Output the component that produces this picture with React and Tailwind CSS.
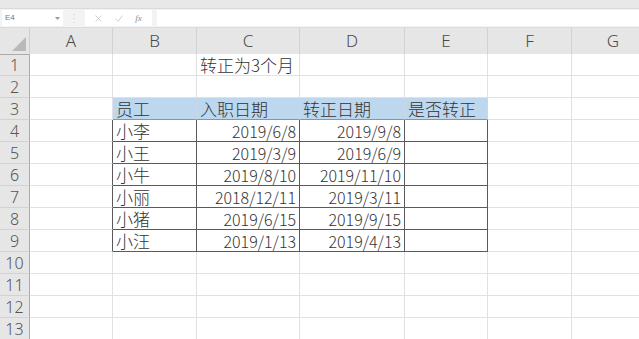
import React from "react";

const cols = ["A", "B", "C", "D", "E", "F", "G"];
const data = [
  ["小李", "2019/6/8", "2019/9/8"],
  ["小王", "2019/3/9", "2019/6/9"],
  ["小牛", "2019/8/10", "2019/11/10"],
  ["小丽", "2018/12/11", "2019/3/11"],
  ["小猪", "2019/6/15", "2019/9/15"],
  ["小汪", "2019/1/13", "2019/4/13"],
];

function cellClass(r, c) {
  const inTable = r >= 4 && r <= 9 && c >= 1 && c <= 4;
  const isHead = r === 3 && c >= 1 && c <= 4;
  let right = "border-r-[#e1e1e1]";
  let bottom = "border-b-[#e1e1e1]";
  if (inTable) {
    right = "border-r-[#5a5a5a]";
    bottom = "border-b-[#5a5a5a]";
  }
  if (isHead) {
    right = "border-r-[#c9d6e6]";
    bottom = "border-b-[#8f8fb3]";
  }
  if (c === 0 && r >= 4 && r <= 9) right = "border-r-[#5a5a5a]";
  let bg = "bg-white";
  if (isHead) bg = "bg-[#bdd7ee]";
  return `border-r border-b ${right} ${bottom} ${bg}`;
}

function cellContent(r, c) {
  if (r === 1 && c === 2) return { text: "转正为3个月", align: "left", cjk: true };
  if (r === 3) {
    const h = { 1: "员工", 2: "入职日期", 3: "转正日期", 4: "是否转正" };
    if (h[c]) return { text: h[c], align: "left", cjk: true };
  }
  if (r >= 4 && r <= 9) {
    const row = data[r - 4];
    if (c === 1) return { text: row[0], align: "left", cjk: true };
    if (c === 2) return { text: row[1], align: "right" };
    if (c === 3) return { text: row[2], align: "right" };
  }
  return null;
}

export default function App() {
  const rows = Array.from({ length: 13 }, (_, i) => i + 1);
  return (
    <div
      className="w-[639px] h-[339px] overflow-hidden bg-white"
      style={{ fontFamily: '"Noto Sans CJK SC", "Noto Sans", sans-serif' }}
    >
      <div className="w-[655px]">
        {/* top strip */}
        <div className="h-[9px] bg-[#e8e8e8] border-b border-b-[#dadada]" />
        {/* formula bar */}
        <div className="h-[19px] bg-[#f3f3f3] flex items-center pl-[2px] border-b border-b-[#dcdcdc]">
          <div className="w-[61px] h-[16px] bg-white flex items-center justify-between px-[3px]">
            <span className="text-[8px] text-[#777] leading-none" style={{ fontFamily: '"Liberation Sans", sans-serif' }}>E4</span>
            <svg width="5" height="3" viewBox="0 0 5 3"><path d="M0 0h5L2.5 3z" fill="#999" /></svg>
          </div>
          <div className="w-[22px] flex justify-center">
            <svg width="2" height="9" viewBox="0 0 2 9">
              <rect x="0.5" y="0" width="1" height="1" fill="#c4c4c4" />
              <rect x="0.5" y="4" width="1" height="1" fill="#c4c4c4" />
              <rect x="0.5" y="8" width="1" height="1" fill="#c4c4c4" />
            </svg>
          </div>
          <div className="w-[67px] h-[16px] bg-white flex items-center justify-around px-[4px]">
            <svg width="7" height="7" viewBox="0 0 7 7"><path d="M0.5 0.5l6 6M6.5 0.5l-6 6" stroke="#cfcfcf" strokeWidth="1" /></svg>
            <svg width="8" height="7" viewBox="0 0 8 7"><path d="M0.5 3.5l2.5 3 4.5-6" stroke="#cfcfcf" strokeWidth="1" fill="none" /></svg>
            <span className="text-[9px] italic text-[#8a8a8a] leading-none" style={{ fontFamily: '"Liberation Serif", serif' }}>fx</span>
          </div>
          <div className="ml-[5px] flex-1 h-[16px] bg-white" />
        </div>
        {/* column headers */}
        <div className="grid grid-cols-[30px_83px_84px_103px_105px_83px_84px_83px] h-[26px]">
          <div className="bg-[#e6e6e6] border-r border-r-[#cfcfcf] border-b border-b-[#ababab] relative">
            <svg className="absolute right-[3px] bottom-[3px]" width="14" height="14" viewBox="0 0 14 14">
              <path d="M14 0V14H0z" fill="#b9b9b9" />
            </svg>
          </div>
          {cols.map((c) => (
            <div
              key={c}
              className="bg-[#e6e6e6] border-r border-r-[#d2d2d2] border-b border-b-[#ababab] flex items-center justify-center text-[17px] text-[#4a4a4a]"
              style={{ fontFamily: '"Noto Sans", sans-serif', fontWeight: 300 }}
            >
              {c}
            </div>
          ))}
        </div>
        {/* rows */}
        <div className="grid grid-cols-[30px_83px_84px_103px_105px_83px_84px_83px] auto-rows-[22px]">
          {rows.map((r) => (
            <React.Fragment key={r}>
              <div
                className="bg-[#e6e6e6] border-r border-r-[#ababab] border-b border-b-[#d2d2d2] flex items-center justify-center text-[16px] text-[#555]"
                style={{ fontFamily: '"Noto Sans", sans-serif', fontWeight: 300 }}
              >
                {r}
              </div>
              {cols.map((_, c) => {
                const content = cellContent(r, c);
                return (
                  <div
                    key={c}
                    className={`${cellClass(r, c)} flex items-center overflow-visible whitespace-nowrap text-[#333] leading-[20px] font-light ${
                      content && content.cjk ? "text-[17px]" : "text-[16px]"
                    } ${content && content.align === "right" ? "justify-end pr-[3px]" : "justify-start pl-[3px]"}`}
                  >
                    {content ? content.text : null}
                  </div>
                );
              })}
            </React.Fragment>
          ))}
        </div>
      </div>
    </div>
  );
}
